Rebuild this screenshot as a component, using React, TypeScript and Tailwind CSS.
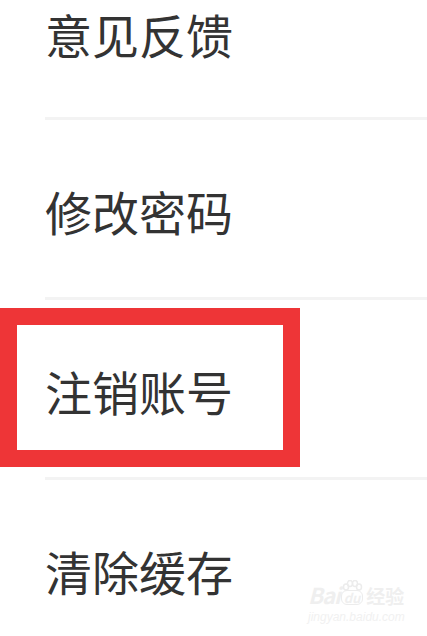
const items = ['意见反馈', '修改密码', '注销账号', '清除缓存'];

const cjk = { fontFamily: '"Noto Sans CJK SC", "Noto Sans", sans-serif' };

function Watermark() {
  return (
    <div className="absolute left-[308px] top-[580px] flex flex-col items-start text-[#efefef]" style={cjk}>
      <div className="flex items-end gap-[1px] leading-none">
        <span className="text-[22px] font-bold italic tracking-[-1px]">Bai</span>
        <span className="relative flex flex-col items-center">
          <svg width="22" height="12" viewBox="0 0 22 12" className="mb-[-2px]">
            <g fill="none" stroke="#ececec" strokeWidth="1.5">
              <ellipse cx="5" cy="7" rx="2.5" ry="3" />
              <ellipse cx="9" cy="3.5" rx="2.5" ry="3" />
              <ellipse cx="14" cy="3.5" rx="2.5" ry="3" />
              <ellipse cx="18" cy="7" rx="2.5" ry="3" />
            </g>
          </svg>
          <span className="rounded-[6px] border-[1.5px] border-[#ececec] px-[2px] text-[13px] font-bold italic">du</span>
        </span>
        <span className="ml-[2px] text-[19px] font-bold">经验</span>
      </div>
      <span className="mt-[3px] text-[12px] italic text-[#f1f1f1]" style={{ fontFamily: '"Liberation Sans", sans-serif' }}>
        jingyan.baidu.com
      </span>
    </div>
  );
}

export default function App() {
  return (
    <div className="relative h-[636px] w-[427px] overflow-hidden bg-white" style={cjk}>
      <div className="flex flex-col">
        {items.map((label, i) => (
          <div key={label} className="ml-[45px] flex flex-col">
            <div className={i === 0 ? 'flex h-[117px] items-start' : 'flex h-[177px] items-center pt-[4px]'}>
              <span className="text-[47px] leading-[68px] text-[#333333]">{label}</span>
            </div>
            <div className="h-[3px] bg-[#f3f3f3]" />
          </div>
        ))}
      </div>
      <div className="absolute left-0 top-[308px] h-[159px] w-[300px] border-[17px] border-[#ee3537]" />
      <Watermark />
    </div>
  );
}
